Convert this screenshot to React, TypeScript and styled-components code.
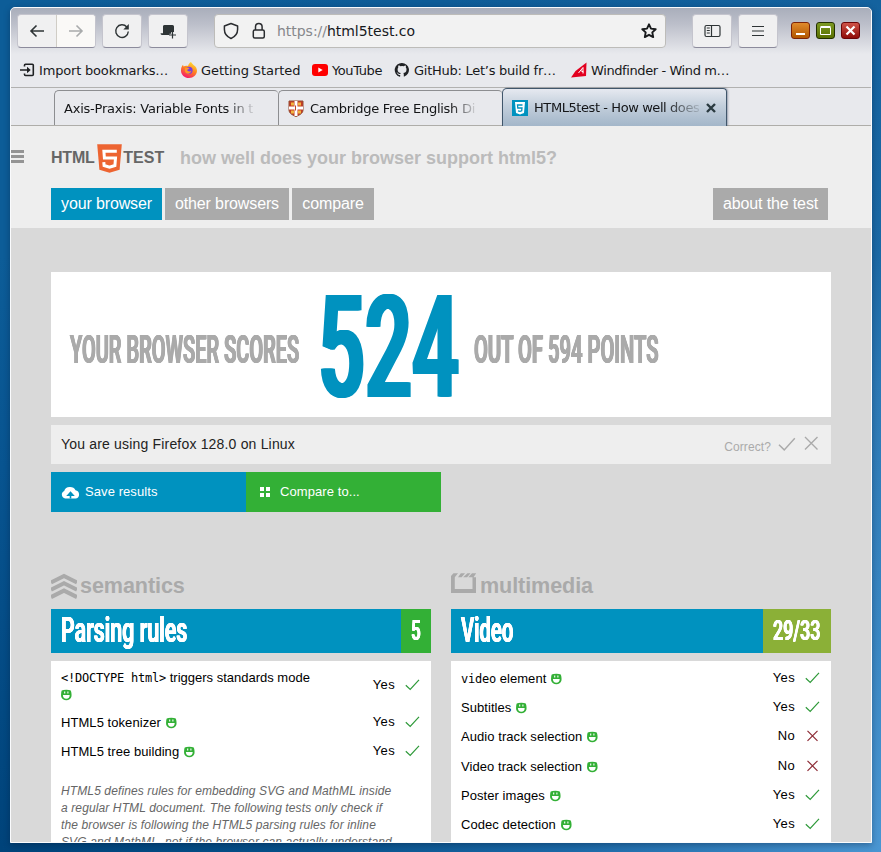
import React from "react";
import styled, { createGlobalStyle, css } from "styled-components";

const SANS = '"Liberation Sans", Arial, sans-serif';
const UI = '"DejaVu Sans", sans-serif';

const GlobalStyle = createGlobalStyle`
  * { box-sizing: border-box; }
  html, body, #root { height: 100%; }
  body { margin: 0; overflow: hidden; font-family: ${SANS}; }
  svg { display: block; flex: none; }
`;

const Desktop = styled.div`
  height: 852px;
  width: 881px;
  padding: 7px 9px 9px 10px;
  overflow: hidden;
  background:
    linear-gradient(90deg, #00437a 0, #06518a 35%, #1c6aa8 65%, #4a96d2 100%) 0 100% / 100% 9px no-repeat,
    linear-gradient(180deg, #0d5d98 0, #0d5d98 30%, #085490 55%, #00437a 100%) 0 0 / 10px 100% no-repeat,
    linear-gradient(180deg, #14629e 0, #1b69a5 30%, #2c79b5 45%, #3a87c3 75%, #4a96d2 100%) 100% 0 / 10px 100% no-repeat,
    linear-gradient(90deg, #0d5d98 0, #0e5c97 50%, #14629e 100%);
`;

const Window = styled.div`
  width: 862px;
  height: 836px;
  border: 1px solid #fafbfd;
  border-radius: 5px 5px 0 0;
  display: flex;
  flex-direction: column;
  overflow: hidden;
  background: #e8e9ed;
  box-shadow: 0 2px 6px rgba(0, 20, 50, 0.35);
`;

const Toolbar = styled.div`
  flex: none;
  height: 46px;
  display: flex;
  align-items: flex-start;
  padding: 6px 10px 0 6px;
  background: linear-gradient(180deg, #a9aebb 0, #bcbfca 35%, #e8e9ed 100%);
`;

const face = css`
  height: 34px;
  background: #f0f0f1;
  border: 1px solid #c4c4cd;
  border-bottom-color: #8c8b9c;
  border-radius: 4px;
  display: flex;
  align-items: center;
`;

const ToolButton = styled.div<{ $gap: number }>`
  ${face}
  width: 40px;
  margin-left: ${(p) => p.$gap}px;
  justify-content: center;
`;

const NavPair = styled.div`
  ${face}
  width: 79px;
  overflow: hidden;
`;

const NavHalf = styled.div<{ $off?: boolean }>`
  flex: 1;
  height: 100%;
  display: flex;
  align-items: center;
  justify-content: center;
  background: ${(p) => (p.$off ? "#faf9f7" : "transparent")};
  border-left: ${(p) => (p.$off ? "1px solid #d0cdc6" : "none")};
`;

const AddressBar = styled.div`
  ${face}
  width: 452px;
  margin-left: 26px;
  padding: 0 8px;
  gap: 13px;
  background: #f2f2f2;
  border-color: #bdbcb9;
  font: 14px ${UI};
  color: #17191c;
`;

const Url = styled.span`
  margin-left: -2px;
  flex: 1;
  letter-spacing: -0.03px;
  i { font-style: normal; color: #86878b; }
`;

const WindowButtons = styled.div`
  display: flex;
  gap: 6px;
  margin: 8px 0 0 13px;
`;

const WindowButton = styled.div<{ $from: string; $to: string; $edge: string }>`
  width: 19px;
  height: 17px;
  border-radius: 3px;
  border: 1px solid ${(p) => p.$edge};
  background: linear-gradient(180deg, ${(p) => p.$from}, ${(p) => p.$to});
`;

const Bookmarks = styled.div`
  flex: none;
  height: 34px;
  display: flex;
  align-items: center;
  padding: 0 0 1px 9px;
  border-bottom: 1px solid #b1b1b0;
  font: 13px ${UI};
  color: #17181a;
`;

const Bookmark = styled.div<{ $width: number; $tracking?: number }>`
  width: ${(p) => p.$width}px;
  letter-spacing: ${(p) => p.$tracking || 0}px;
  display: flex;
  align-items: center;
  gap: 4px;
  white-space: nowrap;
  flex: none;
`;

const TabStrip = styled.div`
  flex: none;
  height: 38px;
  display: flex;
  align-items: flex-end;
  padding-left: 43px;
  border-bottom: 1px solid #aeada9;
  font: 13px ${UI};
  color: #141517;
`;

const Tab = styled.div<{ $active?: boolean; $width: number }>`
  width: ${(p) => p.$width}px;
  height: 35px;
  border: 1px solid #8d8e91;
  border-right: none;
  border-bottom: none;
  border-radius: 5px 4px 0 0;
  display: flex;
  align-items: center;
  padding: 1px 8px 0 9px;
  ${(p) =>
    p.$active &&
    css`
      height: 38px;
      margin-bottom: -1px;
      padding-bottom: 1px;
      border: 1px solid #40566b;
      border-bottom: none;
      background: linear-gradient(180deg, #e6e9f0 0, #c3cfdc 45%, #a3b6c9 100%);
      box-shadow: 1px 0 2px rgba(60, 70, 100, 0.45);
    `}
`;

const TabLabel = styled.span<{ $fade: number; $tracking: number; $gap?: number }>`
  margin-left: ${(p) => p.$gap || 0}px;
  letter-spacing: ${(p) => p.$tracking}px;
  white-space: nowrap;
  mask-image: linear-gradient(90deg, #000 calc(100% - ${(p) => p.$fade}px), rgba(0, 0, 0, 0.12) 100%);
`;

const TabClose = styled.svg`
  margin-left: auto;
  margin-right: 2px;
`;

const Page = styled.div`
  flex: 1;
  min-height: 0;
  overflow: hidden;
  background: #d9d9d9;
`;

const PageHeader = styled.header`
  height: 102px;
  padding: 17px 43px 0 0;
  background: #eee;
`;

const Brand = styled.div`
  display: flex;
  align-items: center;
  height: 30px;
  font: bold 16px ${SANS};
  color: #666;
`;

const MenuBars = styled.svg`
  margin: 0 27px 4px 0;
`;

const BrandWord = styled.span<{ $width: number; $tracking: number }>`
  width: ${(p) => p.$width}px;
  letter-spacing: ${(p) => p.$tracking}px;
`;

const Tagline = styled.span`
  margin-left: 14px;
  font-size: 18px;
  color: #bbb;
`;

const Nav = styled.nav`
  display: flex;
  gap: 3px;
  margin: 15px 0 0 40px;
`;

const NavLink = styled.a<{ $active?: boolean; $width: number }>`
  width: ${(p) => p.$width}px;
  height: 32px;
  line-height: 31px;
  text-align: center;
  font-size: 16px;
  letter-spacing: -0.13px;
  color: #fff;
  background: ${(p) => (p.$active ? "#0092bf" : "#aaa")};
  &:last-child { margin-left: auto; }
`;

const Main = styled.main`
  width: 780px;
  margin: 44px 0 0 40px;
`;

const Condensed = styled.span<{ $size: number; $scale: number; $width: number; $fat: number }>`
  display: block;
  width: ${(p) => p.$width}px;
  white-space: nowrap;
  font: 600 ${(p) => p.$size}px Roboto, sans-serif;
  line-height: 1;
  transform: scaleX(${(p) => p.$scale});
  transform-origin: 0 50%;
  text-shadow: ${(p) => [-1, -0.5, 0.5, 1].map((k) => `${k * p.$fat}px 0 currentColor`).join(", ")};
`;

const ScoreCard = styled.section`
  height: 145px;
  display: flex;
  align-items: center;
  padding-left: 19px;
  background: #fff;
  color: #aaa;
`;

const Score = styled.div`
  color: #0092bf;
  margin: 8px 18px 0 18px;
`;

const ScoreText = styled.div`
  padding-top: 10px;
`;

const UsingBar = styled.section`
  height: 39px;
  margin-top: 8px;
  padding: 0 11px 2px 10px;
  display: flex;
  align-items: center;
  background: #eee;
  color: #222;
  font-size: 14px;
  letter-spacing: 0.18px;
  line-height: 16px;
`;

const Correct = styled.span`
  margin: 6px 7px 0 auto;
  font-size: 12px;
  letter-spacing: 0.1px;
  color: #aaa;
`;

const Dismiss = styled.svg`
  margin-left: 6px;
`;

const Actions = styled.div`
  display: flex;
  margin-top: 8px;
`;

const Action = styled.div<{ $color: string }>`
  width: 195px;
  height: 40px;
  display: flex;
  align-items: center;
  padding: 0 0 2px 10px;
  gap: 5px;
  font-size: 13px;
  letter-spacing: 0.08px;
  color: #fff;
  background: ${(p) => p.$color};
  svg { margin-top: 2px; }
`;

const Columns = styled.div`
  display: grid;
  grid-template-columns: 380px 380px;
  gap: 20px;
  margin-top: 61px;
`;

const SectionTitle = styled.h2`
  height: 36px;
  margin: 0;
  display: flex;
  align-items: flex-start;
  gap: 3px;
  font-size: 21.6px;
  letter-spacing: -0.1px;
  line-height: 25px;
  color: #aaa;
`;

const Band = styled.div`
  height: 44px;
  display: flex;
  align-items: stretch;
  background: #0092bf;
  color: #fff;
`;

const BandTitle = styled.div`
  flex: 1;
  padding: 4px 0 0 10px;
`;

const BandScore = styled.div<{ $width: number; $color: string }>`
  width: ${(p) => p.$width}px;
  padding: 8px 0 0 10px;
  background: ${(p) => p.$color};
`;

const Panel = styled.div`
  margin-top: 8px;
  padding: 3px 10px 0;
  height: 260px;
  background: #fff;
  font-size: 13px;
  color: #000;
`;

const Row = styled.div<{ $tall?: boolean }>`
  height: ${(p) => (p.$tall ? 43.8 : 29.2)}px;
  display: flex;
  align-items: center;
  line-height: 17px;
  > svg { margin: -2px 1px 0 -1px; }
`;

const Label = styled.span`
  flex: 1;
  padding-right: 50px;
  letter-spacing: 0.06px;
  svg { display: inline-block; vertical-align: -2px; margin-left: 1px; }
`;

const TallLabel = styled(Label)`
  letter-spacing: 0;
  svg { margin-left: 0; }
`;

const Code = styled.code`
  font: 12px "DejaVu Sans Mono", monospace;
  letter-spacing: -0.22px;
`;

const Result = styled.span`
  margin: -2px 11px 0 0;
  letter-spacing: 0.35px;
`;

const Note = styled.p`
  margin: 17px 0 0;
  width: 340px;
  font: italic 12px/17px ${SANS};
  letter-spacing: 0.115px;
  color: #666;
  white-space: nowrap;
`;

const Smile = () => (
  <svg width="11" height="12" viewBox="0 0 11 12">
    <path d="M.2 3.500Q0 1 2.500 1 5.300.3 8 1q2.500 0 2.300 2.500.5 2.500 0 4.500-1 3-5 3.200-4-.2-5-3.200-.5-2 0-4.500z" fill="#33b036" />
    <path d="M1.900 6h6.800a3.400 3.700 0 0 1-6.800 0z" fill="#fff" />
    <path d="M3.700 2.500v2M6.900 2.500v2" stroke="#fff" strokeWidth="1.100" />
  </svg>
);

const Check = ({ w = 15, color = "#2f9a3a" }: { w?: number; color?: string }) => (
  <svg width={w} height={w} viewBox="0 0 15 15" fill="none" stroke={color} strokeWidth="1.2">
    <path d="M.8 8.2 5.2 12.4 14 2.8" />
  </svg>
);

const Cross = () => (
  <svg width="15" height="15" viewBox="0 0 15 15" fill="none" stroke="#8d2b35" strokeWidth="1.2">
    <path d="M2.500 2.800 12.500 12.800M12.500 2.800 2.500 12.800" />
  </svg>
);

const Html5Shield = () => (
  <svg width="25" height="29" viewBox="0 0 25 29">
    <path d="M.2.3h24.600l-2.200 25.500-10.100 3-10.100-3z" fill="#ed6431" />
    <path d="M19.800 7.300H6.900l.5 6.700h11.100l-.6 7.500-5.400 1.700-5.400-1.700-.3-3.400" fill="none" stroke="#fff" strokeWidth="3" />
  </svg>
);

const Arrow = ({ flip, color }: { flip?: boolean; color: string }) => (
  <svg width="16" height="14" viewBox="0 0 16 14" fill="none" stroke={color} strokeWidth="1.6">
    <path d={flip ? "M1 7h13M8.5 1.5 14 7l-5.5 5.5" : "M15 7H2M7.500 1.500 2 7l5.500 5.500"} />
  </svg>
);

const semanticsNote = [
  "HTML5 defines rules for embedding SVG and MathML inside",
  "a regular HTML document. The following tests only check if",
  "the browser is following the HTML5 parsing rules for inline",
  "SVG and MathML, not if the browser can actually understand",
];

const videoRows: [React.ReactNode, boolean][] = [
  [<><Code>video</Code> element</>, true],
  ["Subtitles", true],
  ["Audio track selection", false],
  ["Video track selection", false],
  ["Poster images", true],
  ["Codec detection", true],
];

const TestRow = ({ label, pass }: { label: React.ReactNode; pass: boolean }) => (
  <Row>
    <Label>{label} <Smile /></Label>
    <Result>{pass ? "Yes" : "No"}</Result>
    {pass ? <Check /> : <Cross />}
  </Row>
);

const BrowserToolbar = () => (
  <Toolbar>
    <NavPair>
      <NavHalf><Arrow color="#2e3436" /></NavHalf>
      <NavHalf $off><Arrow flip color="#a9abac" /></NavHalf>
    </NavPair>
    <ToolButton $gap={6}>
      <svg width="16" height="16" viewBox="0 0 16 16" fill="none" stroke="#2e3436" strokeWidth="1.400">
        <path d="M12.800 4A6.300 6.300 0 1 0 14.300 8.500" />
        <path d="M14.800 1v5.500H9.300z" fill="#2e3436" stroke="none" />
      </svg>
    </ToolButton>
    <ToolButton $gap={6}>
      <svg width="17" height="15" viewBox="0 0 17 15">
        <path d="M3 2q.5-1 1.500-1h8q1.500 0 1.500 1.500V8H12v3H2Q.5 11 .5 9.200H3z" fill="#2e3436" />
        <path d="M12.500 8v7M9.500 11h6.500" stroke="#f0f0f1" strokeWidth="2.600" />
        <path d="M12.500 7.500v7M9 11h7" stroke="#2e3436" strokeWidth="1.200" />
      </svg>
    </ToolButton>
    <AddressBar>
      <svg width="16" height="18" viewBox="0 0 16 18" fill="none" stroke="#2b2d30" strokeWidth="1.5">
        <path d="M8 1.500 14.600 4v3.500c0 4.400-2.700 7.300-6.600 9-3.900-1.700-6.600-4.600-6.600-9V4z" strokeLinejoin="round" />
      </svg>
      <svg width="14" height="18" viewBox="0 0 14 18" fill="none" stroke="#2b2d30" strokeWidth="1.5">
        <rect x="1.300" y="8" width="11" height="8" rx="1.500" />
        <path d="M3.500 8V4.800a3.300 3.300 0 0 1 6.600 0V8" />
      </svg>
      <Url><i>https://</i>html5test.co</Url>
      <svg width="16" height="16" viewBox="0 0 16 16" fill="none" stroke="#191b1d" strokeWidth="1.900" strokeLinejoin="round">
        <path d="m8 1.300 2 4.300 4.700.6-3.400 3.200.9 4.700L8 11.800l-4.200 2.300.9-4.700L1.300 6.200 6 5.600z" />
      </svg>
    </AddressBar>
    <ToolButton $gap={26}>
      <svg width="17" height="14" viewBox="0 0 17 14" fill="none" stroke="#2e3436" strokeWidth="1.200">
        <rect x="1" y="1.500" width="15" height="11" rx="1.500" />
        <path d="M7.500 1.500v11M2.800 4h3M2.800 6.500h3M2.800 9h3" />
      </svg>
    </ToolButton>
    <ToolButton $gap={6}>
      <svg width="12" height="12" viewBox="0 0 12 12" stroke="#2e3436" strokeWidth="1.200">
        <path d="M0 1.500h12M0 6h12M0 10.500h12" />
      </svg>
    </ToolButton>
    <WindowButtons>
      <WindowButton $from="#e08b2c" $to="#b25600" $edge="#7d2408">
        <svg width="17" height="15"><path d="M4 11h9" stroke="#fff" strokeWidth="2" /></svg>
      </WindowButton>
      <WindowButton $from="#7d9a23" $to="#596f00" $edge="#233000">
        <svg width="17" height="15" fill="none" stroke="#fff"><path d="M3.500 4.500h10v7h-10zM3.500 3.500h10" /></svg>
      </WindowButton>
      <WindowButton $from="#cf5348" $to="#8f0c08" $edge="#6b0508">
        <svg width="17" height="15" stroke="#fff" strokeWidth="2.200"><path d="m4.500 3.500 8 8M12.500 3.500l-8 8" /></svg>
      </WindowButton>
    </WindowButtons>
  </Toolbar>
);

const BookmarkBar = () => (
  <Bookmarks>
    <Bookmark $width={161} $tracking={-0.18}>
      <svg width="15" height="14" viewBox="0 0 15 14" fill="none" stroke="#1e2022" strokeWidth="1.600">
        <path d="M4.500 3.500V2.300q0-1 1-1h6.800q1 0 1 1v9.200q0 1-1 1H5.500q-1 0-1-1v-1M0 7h8" />
        <path d="m7 3.800 3.700 3.200L7 10.200z" fill="#1e2022" stroke="none" />
      </svg>
      Import bookmarks…
    </Bookmark>
    <Bookmark $width={131} $tracking={-0.08}>
      <svg width="16" height="16" viewBox="0 0 16 16">
        <defs>
          <linearGradient id="fox" x1=".8" y1="0" x2=".3" y2="1">
            <stop offset="0" stopColor="#ffe83a" /><stop offset=".45" stopColor="#ff8a1e" /><stop offset="1" stopColor="#f5156c" />
          </linearGradient>
        </defs>
        <path d="M10 0c1 1.500 1.700 2 2.800 3.200C14.800 4.300 16 6.500 16 9c-.4 4-3.500 7-8 7s-8-3.300-8-7.300C0 6 .7 4.300 2 2.800l.5 1.700c1.500-.8 3-1 4.500-.5C7.700 1.800 8.700.7 10 0z" fill="url(#fox)" />
        <circle cx="8" cy="8.300" r="3.600" fill="#7a3be0" />
        <path d="M4 6.500C5 5 7 5.300 8.500 6.500L6 8c.7 1.500 3 2 4.500.5C10 11.500 7 12.500 5 11 3.800 10 3.500 8 4 6.500z" fill="#ff9a25" />
      </svg>
      Getting Started
    </Bookmark>
    <Bookmark $width={82} $tracking={-0.4}>
      <svg width="16" height="12" viewBox="0 0 16 12">
        <rect width="16" height="12" rx="3" fill="#f00" /><path d="M6.300 3.400 10.700 6 6.300 8.600z" fill="#fff" />
      </svg>
      YouTube
    </Bookmark>
    <Bookmark $width={177} $tracking={-0.26}>
      <svg width="16" height="16" viewBox="0 0 16 16">
        <path fill="#202225" d="M8 1a7 7 0 0 0-2.300 13.700c.4.100.5-.2.500-.4v-1.400c-2 .4-2.400-.9-2.400-.9-.3-.8-.8-1-.8-1-.600-.500.100-.500.100-.500.700.1 1.100.8 1.100.8.700 1.100 1.700.8 2.100.6 0-.5.3-.8.500-1-1.600-.2-3.200-.8-3.200-3.500 0-.8.300-1.400.700-1.900-.1-.2-.3-.9.100-1.900 0 0 .6-.2 2 .700a6.700 6.700 0 0 1 3.400 0c1.300-.9 1.900-.7 1.900-.7.400 1 .1 1.700.1 1.900.500.500.700 1.100.700 1.900 0 2.700-1.600 3.300-3.200 3.500.3.200.5.7.5 1.300v2c0 .3.1.5.5.4A7 7 0 0 0 8 1z" />
      </svg>
      GitHub: Let’s build fr…
    </Bookmark>
    <Bookmark $width={170} $tracking={-0.4}>
      <svg width="16" height="16" viewBox="0 0 16 16">
        <path d="M15.500.500 15 14 0 15.500 4.500 9z" fill="#e2001f" />
        <path d="M7.500 11 12 5.500v6M9.500 8.500l3 1.500" fill="none" stroke="#fff" strokeWidth="1" />
      </svg>
      Windfinder - Wind m…
    </Bookmark>
  </Bookmarks>
);

const Tabs = () => (
  <TabStrip>
    <Tab $width={224}><TabLabel $tracking={-0.22} $fade={26}>Axis-Praxis: Variable Fonts in t</TabLabel></Tab>
    <Tab $width={224}>
      <svg width="16" height="17" viewBox="0 0 16 17">
        <path d="M1 1h14v9c0 3-3 5-7 6.500C4 15 1 13 1 10z" fill="#c63b22" stroke="#934b32" />
        <path d="M8 1v15M1 8h14" stroke="#fff" strokeWidth="3" />
        <path d="M3 4h3M10 4h3M3 12h3M10 12h3" stroke="#efb340" strokeWidth="3" />
        <path d="M7.500 5.500v5" stroke="#bd432a" />
      </svg>
      <TabLabel $gap={6} $tracking={-0.28} $fade={24}>Cambridge Free English Di</TabLabel>
    </Tab>
    <Tab $active $width={225}>
      <svg width="16" height="16" viewBox="0 0 16 16">
        <rect width="16" height="16" fill="#0092bf" />
        <path d="M3 2h10l-1 11-4 1.500L4 13z" fill="#fff" />
        <path d="M10.500 5h-5l.3 3H10l-.3 2.800-1.700.6-2-.6" fill="none" stroke="#0092bf" strokeWidth="1.300" />
      </svg>
      <TabLabel $gap={6} $tracking={-0.42} $fade={34}>HTML5test - How well does</TabLabel>
      <TabClose width="10" height="10" viewBox="0 0 10 10" stroke="#2a3a40" strokeWidth="2.400">
        <path d="m1 1 8 8M9 1 1 9" />
      </TabClose>
    </Tab>
  </TabStrip>
);

export default function App() {
  return (
    <Desktop>
      <GlobalStyle />
      <Window>
        <BrowserToolbar />
        <BookmarkBar />
        <Tabs />
        <Page>
          <PageHeader>
            <Brand>
              <MenuBars width="13" height="13" viewBox="0 0 13 13" fill="#949494">
                <path d="M0 0h13v3H0zM0 5h13v3H0zM0 10h13v3H0z" />
              </MenuBars>
              <BrandWord $width={46} $tracking={-0.2}>HTML</BrandWord>
              <Html5Shield />
              <BrandWord $width={44} $tracking={0}>&#8202;TEST</BrandWord>
              <Tagline>how well does your browser support html5?</Tagline>
            </Brand>
            <Nav>
              <NavLink $active $width={111}>your browser</NavLink>
              <NavLink $width={124}>other browsers</NavLink>
              <NavLink $width={82}>compare</NavLink>
              <NavLink $width={115}>about the test</NavLink>
            </Nav>
          </PageHeader>
          <Main>
            <ScoreCard>
              <ScoreText><Condensed $size={38} $scale={0.525} $width={230} $fat={1}>YOUR BROWSER SCORES</Condensed></ScoreText>
              <Score><Condensed $size={142} $scale={0.58} $width={138} $fat={3}>524</Condensed></Score>
              <ScoreText><Condensed $size={38} $scale={0.53} $width={190} $fat={1}>OUT OF 594 POINTS</Condensed></ScoreText>
            </ScoreCard>
            <UsingBar>
              You are using Firefox 128.0 on Linux
              <Correct>Correct?</Correct>
              <Check w={18} color="#aaa" />
              <Dismiss width="18" height="18" viewBox="0 0 18 18" stroke="#aaa" strokeWidth="1.400">
                <path d="m3 2 12.500 12.500M15.500 2 3 14.500" />
              </Dismiss>
            </UsingBar>
            <Actions>
              <Action $color="#0092bf">
                <svg width="19" height="13" viewBox="0 0 19 13">
                  <path d="M4.200 12.500A4 4 0 0 1 3.200 4.900 6 5.300 0 0 1 14.500 4.300 4.200 4.200 0 0 1 15 12.500z" fill="#fff" />
                  <path d="M9.500 12.500V9M7 9.300l2.500-2.800L12 9.300z" stroke="#0092bf" strokeWidth="1.600" fill="#0092bf" />
                </svg>
                Save results
              </Action>
              <Action $color="#33b036">
                <svg width="19" height="12" viewBox="0 0 19 12" fill="#fff">
                  <path d="M4 1h4v4H4zM10 1h4v4h-4zM4 7h4v4H4zM10 7h4v4h-4z" />
                </svg>
                Compare to...
              </Action>
            </Actions>
            <Columns>
              <section>
                <SectionTitle>
                  <svg width="26" height="26" viewBox="0 0 26 26" fill="none" stroke="#aaa" strokeWidth="4">
                    <path d="M0 9.500 13 3l13 6.500M0 16.800 13 10.300l13 6.500M0 24.100 13 17.600l13 6.500" />
                  </svg>
                  semantics
                </SectionTitle>
                <Band>
                  <BandTitle><Condensed $size={35} $scale={0.61} $width={130} $fat={0.6}>Parsing rules</Condensed></BandTitle>
                  <BandScore $color="#33b036" $width={30}><Condensed $size={28} $scale={0.61} $width={10} $fat={0.5}>5</Condensed></BandScore>
                </Band>
                <Panel>
                  <Row $tall>
                    <TallLabel><Code>&lt;!DOCTYPE html&gt;</Code> triggers standards mode<br /><Smile /></TallLabel>
                    <Result>Yes</Result>
                    <Check />
                  </Row>
                  <TestRow label="HTML5 tokenizer" pass />
                  <TestRow label="HTML5 tree building" pass />
                  <Note>{semanticsNote.map((line) => <React.Fragment key={line}>{line}<br /></React.Fragment>)}</Note>
                </Panel>
              </section>
              <section>
                <SectionTitle>
                  <svg width="26" height="21" viewBox="0 0 26 21" fill="#aaa">
                    <path d="M2.500.3H7L3.800 4.200V16H21.500V4.200H17.300L21 .3h4.200L22.500 4.200H25V20H0V3zM9.800.3H14l-3.400 3.900H7zM16.500.3h3l-3.400 3.900h-4z" />
                  </svg>
                  multimedia
                </SectionTitle>
                <Band>
                  <BandTitle><Condensed $size={35} $scale={0.58} $width={60} $fat={0.6}>Video</Condensed></BandTitle>
                  <BandScore $color="#8bb037" $width={68}><Condensed $size={28} $scale={0.635} $width={50} $fat={0.5}>29/33</Condensed></BandScore>
                </Band>
                <Panel>
                  {videoRows.map(([label, pass], i) => <TestRow key={i} label={label} pass={pass} />)}
                </Panel>
              </section>
            </Columns>
          </Main>
        </Page>
      </Window>
    </Desktop>
  );
}
